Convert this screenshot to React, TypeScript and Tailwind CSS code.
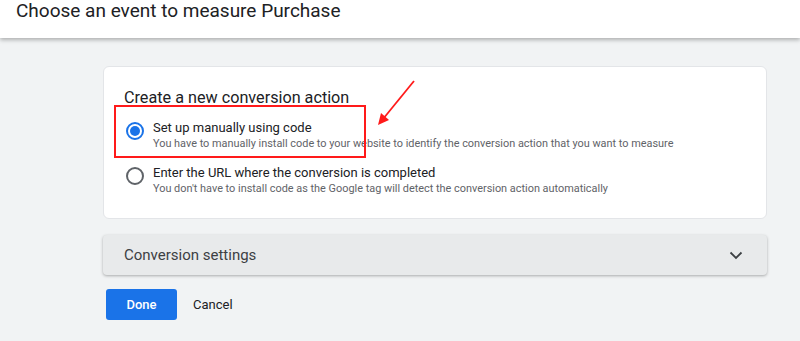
export default function App() {
  const options = [
    {
      id: "code",
      label: "Set up manually using code",
      hint: "You have to manually install code to your website to identify the conversion action that you want to measure",
      checked: true,
    },
    {
      id: "url",
      label: "Enter the URL where the conversion is completed",
      hint: "You don't have to install code as the Google tag will detect the conversion action automatically",
      checked: false,
    },
  ];

  return (
    <div className="relative w-[800px] h-[341px] overflow-hidden bg-[#f1f3f4] font-['Roboto',sans-serif] text-[#3c4043]">
      <header className="h-[38px] bg-white shadow-[0_2px_4px_rgba(0,0,0,0.28)] relative z-10 pl-4">
        <h1 className="text-[19px] leading-[22px] text-[#202124]">
          Choose an event to measure Purchase
        </h1>
      </header>

      <div className="ml-[103px] w-[664px] pt-[28px]">
        <section className="relative h-[153px] bg-white rounded-md border border-[#e3e5e8] pl-5 pt-[21px]">
          <h2 className="text-[16.2px] leading-5 text-[#202124]">Create a new conversion action</h2>
          <div className="mt-[11px] flex flex-col gap-[13px]">
            {options.map((o) => (
              <label key={o.id} className="flex items-start gap-[9px] pl-[2px]">
                <span
                  className={`mt-[3px] w-[18px] h-[18px] rounded-full border-2 flex items-center justify-center shrink-0 ${
                    o.checked ? "border-[#1a73e8]" : "border-[#5f6368]"
                  }`}
                >
                  {o.checked && <span className="w-[10px] h-[10px] rounded-full bg-[#1a73e8]" />}
                </span>
                <span className="flex flex-col">
                  <span className="text-[13px] leading-[17px] text-[#202124]">{o.label}</span>
                  <span className="text-[10.9px] leading-[15px] text-[#5f6368]">{o.hint}</span>
                </span>
              </label>
            ))}
          </div>

          {/* annotation */}
          <div className="absolute left-[10px] top-[38px] w-[252px] h-[53px] border-2 border-[#ff1a1a]" />
          <svg className="absolute left-[270px] top-[10px]" width="44" height="52" viewBox="0 0 44 52">
            <line x1="40" y1="4" x2="9" y2="42" stroke="#ff1a1a" strokeWidth="1.8" />
            <polygon points="4,48 7,36 15,43" fill="#ff1a1a" />
          </svg>
        </section>

        <div className="mt-4 h-[40px] bg-[#e8eaeb] rounded-sm shadow-[0_1px_3px_rgba(0,0,0,0.3)] flex items-center justify-between pl-[21px] pr-[24px]">
          <span className="text-[15px] text-[#3c4043]">Conversion settings</span>
          <svg width="14" height="9" viewBox="0 0 14 9">
            <path d="M1.5 1.5l5.5 5.5 5.5-5.5" fill="none" stroke="#3c4043" strokeWidth="1.8" />
          </svg>
        </div>

        <div className="mt-[14px] flex items-center gap-4 pl-[3px]">
          <button className="w-[71px] h-[31px] rounded-[3px] bg-[#1a73e8] text-white text-[13px] font-medium">
            Done
          </button>
          <button className="text-[13px] text-[#202124]">Cancel</button>
        </div>
      </div>
    </div>
  );
}
